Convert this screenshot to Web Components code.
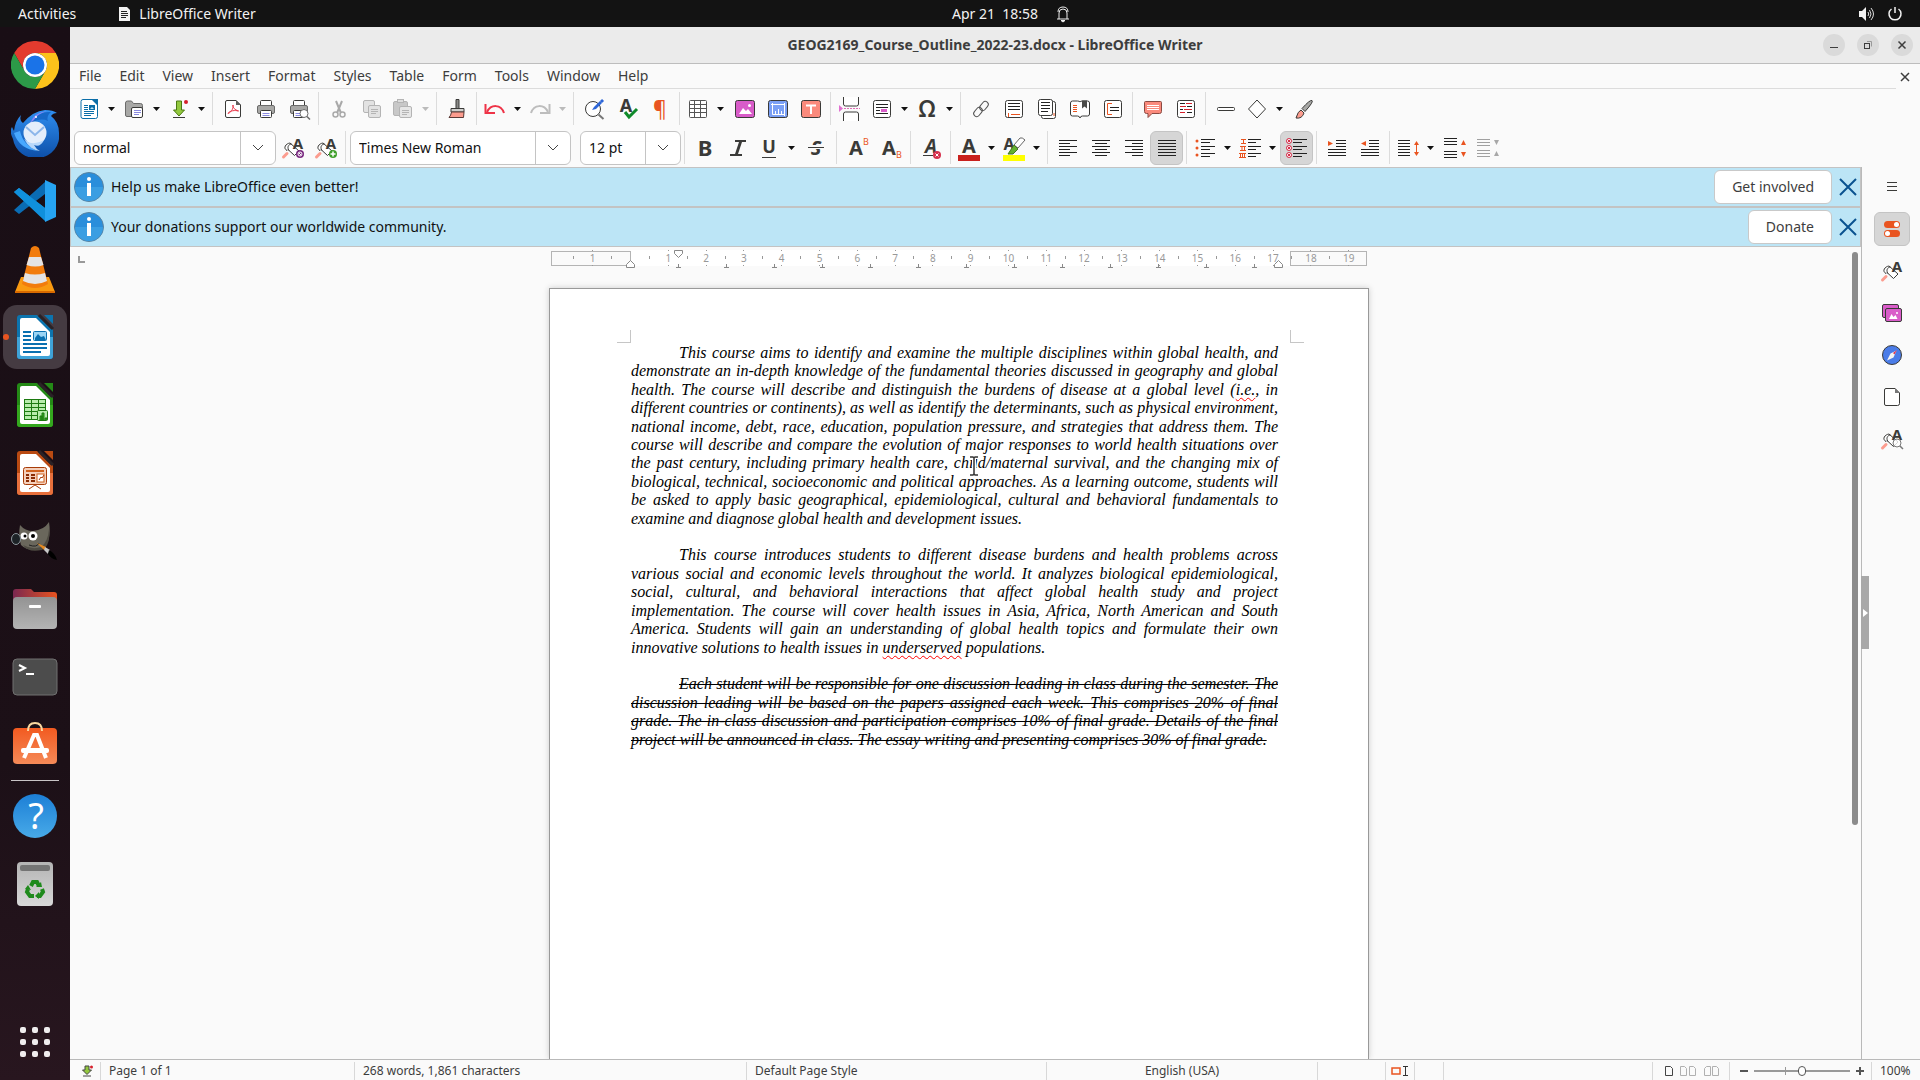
<!DOCTYPE html>
<html lang="en">
<head>
<meta charset="utf-8">
<title>GEOG2169_Course_Outline_2022-23.docx - LibreOffice Writer</title>
<style>
html,body{margin:0;height:100%}
body{font-family:"Noto Sans","Open Sans",sans-serif;font-size:14px;line-height:20px;color:#3d3d3d;background:#fafafa;overflow:hidden}
</style>
</head>
<body>
<desktop-shell>
  <top-panel slot="panel"></top-panel>
  <app-dock slot="dock"></app-dock>
  <writer-window>
    <title-bar slot="title">GEOG2169_Course_Outline_2022-23.docx - LibreOffice Writer</title-bar>
    <menu-bar slot="menu"></menu-bar>
    <standard-toolbar slot="tools"></standard-toolbar>
    <formatting-toolbar slot="tools"></formatting-toolbar>
    <info-bar slot="info" action="Get involved">Help us make LibreOffice even better!</info-bar>
    <info-bar slot="info" action="Donate">Your donations support our worldwide community.</info-bar>
    <doc-view slot="view">
      <doc-paragraph>
        <doc-line first>This course aims to identify and examine the multiple disciplines within global health, and</doc-line>
        <doc-line>demonstrate an in-depth knowledge of the fundamental theories discussed in geography and global</doc-line>
        <doc-line>health. The course will describe and distinguish the burdens of disease at a global level (<spell-error>i.e.</spell-error>, in</doc-line>
        <doc-line>different countries or continents), as well as identify the determinants, such as physical environment,</doc-line>
        <doc-line>national income, debt, race, education, population pressure, and strategies that address them. The</doc-line>
        <doc-line>course will describe and compare the evolution of major responses to world health situations over</doc-line>
        <doc-line>the past century, including primary health care, child/maternal survival, and the changing mix of</doc-line>
        <doc-line>biological, technical, socioeconomic and political approaches. As a learning outcome, students will</doc-line>
        <doc-line>be asked to apply basic geographical, epidemiological, cultural and behavioral fundamentals to</doc-line>
        <doc-line last>examine and diagnose global health and development issues.</doc-line>
      </doc-paragraph>
      <doc-line></doc-line>
      <doc-paragraph>
        <doc-line first>This course introduces students to different disease burdens and health problems across</doc-line>
        <doc-line>various social and economic levels throughout the world. It analyzes biological epidemiological,</doc-line>
        <doc-line>social, cultural, and behavioral interactions that affect global health study and project</doc-line>
        <doc-line>implementation. The course will cover health issues in Asia, Africa, North American and South</doc-line>
        <doc-line>America. Students will gain an understanding of global health topics and formulate their own</doc-line>
        <doc-line last>innovative solutions to health issues in <spell-error>underserved</spell-error> populations.</doc-line>
      </doc-paragraph>
      <doc-line></doc-line>
      <doc-paragraph>
        <doc-line struck first>Each student will be responsible for one discussion leading in class during the semester. The</doc-line>
        <doc-line struck>discussion leading will be based on the papers assigned each week. This comprises 20% of final</doc-line>
        <doc-line struck>grade. The in-class discussion and participation comprises 10% of final grade. Details of the final</doc-line>
        <doc-line struck last>project will be announced in class. The essay writing and presenting comprises 30% of final grade.</doc-line>
      </doc-paragraph>
    </doc-view>
    <side-bar slot="side"></side-bar>
    <status-bar slot="status"></status-bar>
  </writer-window>
</desktop-shell>

<script>
const RESET = `
:host,*{box-sizing:border-box}
button,input{font:inherit;color:inherit;margin:0;padding:0;border:0;background:none;outline:0}
button{display:flex;align-items:center;justify-content:center}
svg{display:block;flex:none}
`;
function define(name, css, html) {
  customElements.define(name, class extends HTMLElement {
    connectedCallback() {
      if (this.shadowRoot) return;
      const body = typeof html === 'function' ? html(this) : html;
      this.attachShadow({mode: 'open'}).innerHTML = `<style>${RESET}${css}</style>${body}`;
    }
  });
}

/* ---------- icon set ---------- */
const D = '#3a3a38', O = '#e95420', S = '#fc9c8e';
const rows = (list, c = '#222') => list.map(([x, y, w]) => `<path d="M${x} ${y}h${w}" stroke="${c}" stroke-width="1"/>`).join('');
const sheet = `<rect x="3.5" y="3.5" width="17" height="17" rx="2" fill="#fff" stroke="${D}"/>`;
const glyph = (t, x, y, size, extra = '') => `<text x="${x}" y="${y}" font-family="Noto Sans, sans-serif" font-weight="700" font-size="${size}" text-anchor="middle" fill="${D}" ${extra}>${t}</text>`;
const printer = `<rect x="6.5" y="3.5" width="11" height="6" rx="1" fill="#fff" stroke="${D}"/><rect x="3.5" y="8.5" width="17" height="8" rx="1.5" fill="#a8a8a6" stroke="#6b6b6a"/><rect x="6.5" y="13.5" width="11" height="7" rx="1" fill="#fff" stroke="${D}"/><path d="M8.5 16.5h7M8.5 18.5h7" stroke="#8a8ae0"/>`;
const styleBrush = `<path d="M2.5 21l3.5-3.5" stroke="${S}" stroke-width="3" stroke-linecap="round"/><path d="M6 14.500C1.500 12 5 7.500 9 7l9 8-4.500 4.500-6.500-6z" fill="#fff" stroke="${D}"/><path d="M8 14.500c-2-3-1-6 2.500-6.500" fill="none" stroke="${D}"/>` + glyph('A', 17, 13, 15);
const alignIcon = (w) => w.map(([x, l], i) => `<path d="M${x} ${4.5 + i * 3}h${l}" stroke="#222" stroke-width="1"/>`).join('');
const listRows = [[8, 3.5, 14], [8, 6.5, 9], [8, 10.5, 14], [8, 13.5, 9], [8, 17.5, 14], [8, 20.5, 9]];

const ICONS = {
  newdoc: `<path d="M6 2.5h10l4.500 4.500v12.500q0 2-2 2H6q-2 0-2-2v-15q0-2 2-2z" fill="#fff" stroke="#0a6da8"/><path d="M14 2h7v7z" fill="#0a6da8"/><path d="M7 8.500h4M7 10.500h4M7 12.500h4M7 14.500h10M7 16.500h10M7 18.500h7" stroke="#0a6da8"/><rect x="12" y="8" width="6" height="5" fill="#0a6da8"/><path d="M13 12l2-2 2 2z" fill="#bfe3f6"/>`,
  open: `<path d="M3.500 18V6q0-2 2-2h4l2 2.500h7q2 0 2 2V18q0 1.500-1.500 1.500H5q-1.500 0-1.500-1.500z" fill="#a8a8a6" stroke="#6b6b6a"/><rect x="9.500" y="10.500" width="11" height="10" rx="1.500" fill="#fff" stroke="${D}"/><path d="M12 13.500h7M12 15.500h7M12 17.500h5" stroke="#8a8ae0"/>`,
  save: `<path d="M9.500 4h5v9h3L12 19 6.500 13h3z" fill="#92c83e" stroke="#4b7a12"/><path d="M6 20.500h12" stroke="${D}"/><circle cx="19" cy="5" r="2" fill="#d6202c"/>`,
  pdf: `<path d="M6 3.500h9l4.500 4.500v11q0 1.500-1.500 1.500H6q-1.500 0-1.500-1.500V5q0-1.500 1.500-1.500z" fill="#fff" stroke="${D}"/><path d="M15 3v5h5z" fill="#5d5d5b"/><path d="M12 8c-1 3 4 6 6 6M12 8c1 4-3 8-5 8.500 1-3 8-3.500 10-2.500" fill="none" stroke="#e8384a"/>`,
  print: printer,
  preview: printer + `<circle cx="17" cy="16.500" r="4" fill="#fff" stroke="#6b6b6a"/><path d="M20 19.500l3 3" stroke="#6b6b6a" stroke-width="1.500"/>`,
  cut: `<g fill="none" stroke="#a9a9a9" stroke-width="1.500"><path d="M9 4l5 12M15 4l-5 12" stroke-width="2"/><circle cx="8.500" cy="17.500" r="2.500"/><circle cx="15.500" cy="17.500" r="2.500"/></g>`,
  copy: `<g fill="#e2e2e2" stroke="#b4b4b4"><rect x="3.500" y="3.500" width="11" height="12" rx="1.500"/><rect x="8.500" y="8.500" width="12" height="12" rx="1.500"/></g><path d="M11 12.500h7M11 14.500h7M11 16.500h5" stroke="#b4b4b4"/>`,
  paste: `<g fill="#c8c8c8" stroke="#b4b4b4"><rect x="2.500" y="4.500" width="14" height="14" rx="1.500"/><rect x="6.500" y="2.500" width="6" height="3" fill="#ddd"/><rect x="8.500" y="9.500" width="12" height="11" rx="1.500" fill="#e6e6e6"/></g><path d="M11 13.500h7M11 15.500h7M11 17.500h5" stroke="#b4b4b4"/>`,
  clone: `<path d="M11 2.500h3V12h-3z" fill="#8a8a88" stroke="${D}"/><path d="M6 11.500h13V15H6z" fill="#d0d0ce" stroke="${D}"/><path d="M6.500 15h12.500l-.5 5.500H4q2-2 2.500-5.500z" fill="${S}" stroke="#5a3a36"/>`,
  undo: `<path d="M4 15C8 7 18 7 21 16" fill="none" stroke="#ee3347" stroke-width="2"/><path d="M2.500 7v9H12" fill="none" stroke="#ee3347" stroke-width="2"/>`,
  redo: `<path d="M20 15C16 7 6 7 3 16" fill="none" stroke="#bdbdbd" stroke-width="2"/><path d="M21.500 7v9H12" fill="none" stroke="#bdbdbd" stroke-width="2"/>`,
  find: `<circle cx="11" cy="12" r="7.500" fill="#fff" stroke="${D}"/><path d="M16.500 17.500l5 4.500" stroke="#777" stroke-width="2"/><path d="M10 13l2-3 6-6 2 2-6 6z" fill="#2d66d8"/><path d="M19 3l2 2" stroke="#2d66d8" stroke-width="3"/>`,
  spell: glyph('A', 11, 15, 18) + `<path d="M10 15l4 5 8-8" fill="none" stroke="#0f8a2a" stroke-width="3"/>`,
  marks: `<text x="12" y="19" font-family="Noto Sans, sans-serif" font-size="21" text-anchor="middle" fill="${O}">¶</text>`,
  table: `<rect x="3.500" y="3.500" width="17" height="17" rx="1" fill="#fff" stroke="#555"/><path d="M3 7.500h18M3 11.500h18M3 15.500h18M8.500 3v18M14.500 3v18" stroke="#555"/>`,
  image: `<rect x="2.500" y="3.500" width="19" height="17" rx="2" fill="#d95cc9" stroke="${D}"/><path d="M6 17l4-6 3 3 2-2 4 5z" fill="#fff"/><circle cx="16.500" cy="8.500" r="1.500" fill="#fff"/>`,
  chart: `<rect x="2.500" y="3.500" width="19" height="17" rx="2" fill="#7ba0f5" stroke="${D}"/><path d="M6.500 6v11.500H19M5 7.500h14M18.500 6v13M9.500 17v-3M12.500 17v-5M15.500 17v-3" fill="none" stroke="#fff"/>`,
  textbox: `<rect x="2.500" y="3.500" width="19" height="17" rx="2" fill="#fa8a7c" stroke="${D}"/><path d="M7 8.500h10M12 8v9" stroke="#fff" stroke-width="2"/>`,
  pagebreak: `<path d="M4.500 0v7q0 2 2 2h11q2 0 2-2V0M4.500 24v-7q0-2 2-2h11q2 0 2 2v7" fill="#fff" stroke="${D}"/><path d="M5 11.500h16" stroke="#e070b8" stroke-dasharray="2 1"/><path d="M0 8l4 3.500-4 3.500z" fill="#e070d0"/>`,
  field: `<rect x="3.500" y="3.500" width="17" height="17" rx="2" fill="#fff" stroke="${D}"/>${rows([[6, 7.5, 12], [6, 10.5, 12], [6, 13.5, 4], [6, 16.5, 12]])}<rect x="11" y="12" width="6" height="3" fill="#d95cc9"/>`,
  omega: `<text x="12" y="20" font-family="Noto Sans, sans-serif" font-size="23" font-weight="600" text-anchor="middle" fill="${D}">Ω</text>`,
  link: `<g fill="none" stroke="#555"><rect x="-5" y="-3" width="10" height="6" rx="3" transform="translate(9 15) rotate(-50)"/><rect x="-5" y="-3" width="10" height="6" rx="3" transform="translate(15 9) rotate(-50)"/></g>`,
  footnote: sheet + rows([[6, 6.5, 12], [6, 9.5, 12], [6, 12.5, 12]]) + `<path d="M9 17.500h9M6.500 16v4" stroke="${O}"/>`,
  endnote: `<rect x="6.500" y="4.500" width="14" height="17" rx="2" fill="#fff" stroke="${D}"/><rect x="3.500" y="2.500" width="14" height="16" rx="2" fill="#fff" stroke="${D}"/>${rows([[6, 5.5, 9], [6, 8.5, 9], [6, 11.5, 9], [6, 14.5, 7]])}<path d="M19 16v3" stroke="${O}"/>`,
  bookmark: `<path d="M2.500 6q0-2 2-2h5q2 0 2.500 1 .5-1 2.500-1h5q2 0 2 2v11q0 2-2 2h-5q-2 0-2.500 2-.5-2-2.500-2h-5q-2 0-2-2z" fill="#fff" stroke="${D}"/><path d="M5 8.500h4M5 10.500h4M5 12.500h4M5 14.500h4" stroke="${O}"/><path d="M14 3.500h5v8l-2.500-2-2.500 2z" fill="#4b4b49"/>`,
  xref: sheet + `<path d="M11 6.500H6.500v11H11" fill="none" stroke="${O}"/>${rows([[9, 10.5, 9], [9, 13.5, 9]])}`,
  comment: `<path d="M4.500 4.500h15q1 0 1 1v9q0 2-2 2H11L7 20.500v-4H5.500q-2 0-2-2v-9q0-1 1-1z" fill="#fa8a7c" stroke="#8a4a42"/><path d="M6 8.500h12M6 10.500h12M6 12.500h12" stroke="#fff"/>`,
  track: sheet + rows([[6, 6.5, 5], [13, 9.5, 5], [6, 12.5, 3], [13, 15.5, 5]]) + rows([[12, 6.5, 6], [6, 9.5, 6], [10, 12.5, 8], [6, 15.5, 5]], '#d6202c'),
  line: `<rect x="3.500" y="10.500" width="17" height="3" rx="1" fill="#fff" stroke="${D}"/>`,
  shape: `<path d="M12 3l8.500 9-8.500 9-8.500-9z" fill="#fff" stroke="${D}"/>`,
  draw: `<path d="M20 3.500q2 1-7 11l-3-3q8-9 10-8z" fill="#a8a8a6" stroke="${D}"/><path d="M9 13l3 3q-2 6-8 5 2-7 5-8z" fill="${S}" stroke="${D}"/>`,

  style1: styleBrush + `<circle cx="19" cy="18" r="4" fill="#7a2a80"/><circle cx="19" cy="18" r="2" fill="none" stroke="#fff"/><path d="M18 17l2 2" stroke="#fff"/>`,
  style2: styleBrush + `<circle cx="19" cy="18" r="4" fill="#3f9f2a"/><path d="M16.500 18h5M19 15.500v5" stroke="#fff" stroke-width="1.500"/>`,
  style: styleBrush,
  styleInspect: styleBrush + `<circle cx="17" cy="16" r="4" fill="#fff" fill-opacity=".8" stroke="#777"/><path d="M20 19l3 3" stroke="#777" stroke-width="1.500"/>`,
  bold: glyph('B', 12, 20, 22),
  italic: `<path d="M9 4h11v2h-4l-4 12h4v2H4v-2h5l4-12H9z" fill="${D}"/>`,
  under: glyph('U', 12, 17, 18) + `<path d="M5 21.500h14" stroke="${D}"/>`,
  strike: glyph('S', 12, 19, 20, 'font-style="italic"') + `<path d="M4 11h16" stroke="#fafafa" stroke-width="4"/><path d="M4 11.500h16" stroke="${D}"/>`,
  sup: glyph('A', 10, 19, 20) + `<text x="20" y="9" font-family="Noto Sans, sans-serif" font-size="9" text-anchor="middle" fill="${O}">B</text>`,
  sub: glyph('A', 10, 19, 20) + `<text x="20" y="22" font-family="Noto Sans, sans-serif" font-size="9" text-anchor="middle" fill="${O}">B</text>`,
  clear: glyph('A', 12, 17, 19, 'font-style="italic"') + `<path d="M4 19.500h10" stroke="${D}"/><circle cx="18" cy="19" r="4" fill="#d6304c"/><path d="M16.500 17.500l3 3M19.500 17.500l-3 3" stroke="#fff"/>`,
  fontcolor: glyph('A', 12, 17, 20) + `<path d="M1 19h22v6H1z" fill="#c9211e"/>`,
  highlight: glyph('A', 7, 14, 16) + `<path d="M12 9l6-7q2-1 5 2l-7 8z" fill="#fff" stroke="#666"/><path d="M12 9l4 4-5 5H6z" fill="#62b030" stroke="#447722"/><path d="M1 19h22v6H1z" fill="#ff0"/>`,
  left: alignIcon([[3, 18], [3, 11], [3, 18], [3, 11], [3, 18], [3, 11]]),
  center: alignIcon([[3, 18], [6, 12], [3, 18], [6, 12], [3, 18], [6, 12]]),
  right: alignIcon([[3, 18], [10, 11], [3, 18], [10, 11], [3, 18], [10, 11]]),
  justify: alignIcon([[3, 18], [3, 18], [3, 18], [3, 18], [3, 18], [3, 18]]),
  bullets: [5, 12, 19].map(y => `<circle cx="4" cy="${y}" r="1.500" fill="${O}"/>`).join('') + rows(listRows),
  numbers: `<path d="M3 3.500h5M3 7.500h5M5.500 3v4M2 10.500h6M2 14.500h6M4 10v4M6.500 10v4M1 17.500h7M1 21.500h7M2.500 17v4M4.500 17v4M6.500 17v4" stroke="${O}"/>` + rows([[10, 3.5, 13], [10, 6.5, 8], [10, 10.5, 13], [10, 13.5, 8], [10, 17.5, 13], [10, 20.5, 8]]),
  nolist: [5, 12, 19].map(y => `<circle cx="4" cy="${y}" r="2.500" fill="#fff" stroke="#d6304c"/><path d="M2.500 ${y - 1.5}l3 3m0-3l-3 3" stroke="#d6304c"/>`).join('') + rows(listRows),
  indent: `<path d="M3 5v5l5-2.500z" fill="${O}"/>` + rows([[11, 4.5, 10], [11, 7.5, 10], [11, 10.5, 10], [3, 13.5, 18], [3, 16.5, 18], [3, 19.5, 18]]),
  outdent: `<path d="M8 5v5L3 7.500z" fill="${O}"/>` + rows([[11, 4.5, 10], [11, 7.5, 10], [11, 10.5, 10], [3, 13.5, 18], [3, 16.5, 18], [3, 19.5, 18]]),
  spacing: rows([[2, 4.5, 12], [2, 7.5, 12], [2, 10.5, 12], [2, 13.5, 12], [2, 16.5, 12], [2, 19.5, 12]]) + `<path d="M20.500 7v11" stroke="${O}"/><path d="M18 9l2.500-4L23 9zM18 16l2.500 4L23 16z" fill="${O}"/>`,
  parainc: rows([[1, 2.5, 13], [1, 5.5, 13], [1, 8.5, 13], [1, 15.5, 13], [1, 18.5, 13], [1, 21.5, 13]]) + `<path d="M18 9l2.500-5L23 9zM18 16l2.500 5 2.500-5z" fill="${O}"/>`,
  paradec: rows([[1, 3.5, 13], [1, 6.5, 13], [1, 9.5, 13], [1, 14.5, 13], [1, 17.5, 13], [1, 20.5, 13]], '#a0a0a0') + `<path d="M18 4l2.500 5L23 4zM18 20l2.500-5 2.500 5z" fill="#a8a8a8"/>`,

  menu: `<path d="M7 7.500h10M7 11.500h10M7 15.500h10" stroke="${D}"/>`,
  props: `<rect x="4" y="4" width="16" height="7" rx="3.500" fill="${O}"/><circle cx="16.500" cy="7.500" r="2.500" fill="#fff"/><rect x="4" y="13" width="16" height="7" rx="3.500" fill="${O}"/><circle cx="7.500" cy="16.500" r="2.500" fill="#fff"/>`,
  gallery: `<rect x="2.500" y="3.500" width="16" height="13" rx="1.500" fill="#d95cc9" stroke="${D}"/><rect x="5.500" y="7.500" width="16" height="13" rx="1.500" fill="#d95cc9" stroke="${D}"/><path d="M9 18l2.500-5 2 3 2-2 2 4z" fill="#fff"/><circle cx="17" cy="12" r="1" fill="#fff"/>`,
  navigator: `<circle cx="12" cy="12" r="9.500" fill="#4a7ce8" stroke="${D}"/><path d="M16.500 7.500l-3 7-6.500 3 3.500-7z" fill="#f4f4f4"/><path d="M13 10l4-3-2.500 4.500z" fill="#e0304a"/>`,
  page: `<path d="M6 3.500h9l4.500 4.500v10.500q0 2-2 2H6q-1.500 0-1.500-1.500V5q0-1.500 1.500-1.500z" fill="#fff" stroke="${D}"/><path d="M15 3v5h5z" fill="#777"/>`,
  close: `<path d="M4 4l16 16M20 4L4 20" stroke="#0a5290" stroke-width="2"/>`
};
/* path data pads halves to three digits; trim them before drawing */
for (const k in ICONS) ICONS[k] = ICONS[k].replace(/\.500/g, '.5');
define('ui-icon', `:host{display:block;width:24px;height:24px;flex:none}svg{overflow:visible}`,
  el => `<svg width="24" height="24" viewBox="0 0 24 24" fill="none" aria-hidden="true">${ICONS[el.getAttribute('name')]}</svg>`);

/* ---------- shell ---------- */
define('desktop-shell', `:host{display:grid;grid-template:27px minmax(0,1fr) / 70px minmax(0,1fr);height:100vh}
slot[name=panel]{display:block;grid-column:1/3}`,
  `<slot name="panel"></slot><slot name="dock"></slot><slot></slot>`);

define('top-panel', `:host{display:grid;grid-template-columns:1fr auto 1fr;align-items:center;background:#131313;color:#f2f2f2;height:27px}
.l{display:flex;align-items:center;padding-left:18px;gap:42px}
.app,.c,.r{display:flex;align-items:center}.app{gap:8px}
.c{gap:18px;padding-left:102px;white-space:pre}
.r{justify-content:flex-end;gap:13px;padding-right:17px}`,
`<div class="l"><button>Activities</button><button class="app"><svg width="13" height="16" viewBox="0 0 13 16"><path d="M1 1h8l3 3v11H1z" fill="#f2f2f2"/><path d="M3 5.5h6M3 7.5h7M3 9.5h7M3 11.5h5" stroke="#222"/></svg>LibreOffice Writer</button></div>
<button class="c">Apr 21  18:58<svg width="14" height="18" viewBox="0 0 14 18" fill="none" stroke="#eee"><path d="M1 14h12M3 14V8q0-4 4-4t4 4v6M2 7q0-5 5-5t5 5"/><path d="M5 15.5h4l-2 1.5z" fill="#eee"/></svg></button>
<div class="r"><button aria-label="Volume"><svg width="16" height="16" viewBox="0 0 16 16"><path d="M1 5h3l4-4v14l-4-4H1z" fill="#f2f2f2"/><path d="M10 6q1.5 2 0 4M11.5 4q3 4 0 8M13 2q5 6 0 12" fill="none" stroke="#ddd"/></svg></button>
<button aria-label="Power"><svg width="16" height="16" viewBox="0 0 16 16" fill="none" stroke="#f2f2f2" stroke-width="1.5"><path d="M4.5 3a6 6 0 1 0 7 0M8 1v6"/></svg></button></div>`);

/* ---------- dock ---------- */
const loDoc = (c1, c2, art) => `<path d="M9 2h17l14 14 2 0v27q0 3-3 3H9q-3 0-3-3V5q0-3 3-3z" fill="${c1}"/><path d="M6 24h36v19q0 3-3 3H9q-3 0-3-3z" fill="${c2}"/><path d="M11 5h14l14 14v22q0 2-2 2H11q-2 0-2-2V7q0-2 2-2z" fill="#fff"/><path d="M28 2l14 14" stroke="#2a2226" stroke-width="3"/><path d="M33 2h9v9z" fill="${c1}"/>${art}`;
const DOCK = {
  Chrome: `<path d="M24 12H44.8A24 24 0 0 1 24 48L34.4 30A12 12 0 0 0 24 12Z" fill="#fcc21b"/><path d="M3.2 12A24 24 0 0 1 44.8 12H24A12 12 0 0 0 13.6 30Z" fill="#e33b2e"/><path d="M3.2 12L13.6 30A12 12 0 0 0 34.4 30L24 48A24 24 0 0 1 3.2 12Z" fill="#2c9a48"/><circle cx="24" cy="24" r="12" fill="#fff"/><circle cx="24" cy="24" r="9.5" fill="#1a73e8"/>`,
  Thunderbird: `<defs><linearGradient id="t" x1="0" y1="0" x2="0" y2="1"><stop offset="0" stop-color="#2f8ff0"/><stop offset="1" stop-color="#0d4fa8"/></linearGradient></defs><path d="M10 6q-2 6 2 8Q22 2 34 1q8 0 12 3-4 0-6 3 8 6 8 17a23 22 0 0 1-46 6q-4-8-1-12l2 4Q4 12 10 6z" fill="url(#t)"/><path d="M19 15Q25 2 40 3q-5 4-3 9-8-4-18 3z" fill="#1768c8"/><path d="M19 14Q24 3 36 2q-10 3-13 9z" fill="#8d86f5"/><circle cx="25" cy="8" r="1" fill="#fff"/><path d="M3 24q5 16 24 18-15-6-18-20z" fill="#48a8ff"/><circle cx="24" cy="24" r="11.5" fill="#e4eefb"/><path d="M15 18l9 8 9-8" fill="none" stroke="#8cb6ea" stroke-width="2"/><path d="M13 30q8 8 20 1-4 8-10 5 2 4 6 6-10-1-16-12z" fill="#b8d8fa"/>`,
  'VS Code': `<path d="M3 15l5-4 26 20v12z" fill="#0f8bd8"/><path d="M3 33l5 4L34 17V5z" fill="#0a6cb4"/><path d="M34 3l11 5v32l-11 5z" fill="#26a4f2"/><path d="M3 15l5-4 26 20v13z" fill="#1090dc"/>`,
  VLC: `<path d="M10 32h28l6 15v2H4v-2z" fill="#f99a10"/><path d="M4 46h40v3H4z" fill="#d86a00"/><path d="M20 3q4-4 8 0l9 36q-13 8-26 0z" fill="#f27c0c"/><path d="M18 12h12l2.5 8q-8 3-17 0zM14 28q10 3 20 0l2 8q-12 6-24 0z" fill="#e4e4e4"/>`,
  Writer: loDoc('#0c74ae', '#3fa3d8', `<path d="M12 19h8M12 23h8M12 27h8M12 31h24M12 35h24M12 39h18" stroke="#0a70b0" stroke-width="2"/><rect x="22.5" y="18.5" width="13" height="9" rx="1" fill="#9bd4f4" stroke="#0a70b0"/><path d="M24 27v-2l3-4 3 3 3-1 2 4z" fill="#0a70b0"/>`),
  Calc: loDoc('#248a16', '#34a81e', `<rect x="13.5" y="18.5" width="21" height="20" fill="#b8ecac" stroke="#1c7a10"/><path d="M13 22.5h22M13 26.5h22M13 30.5h22M13 34.5h22M20.5 18v21M27.5 18v21" stroke="#1c7a10"/><rect x="26.5" y="29.5" width="10" height="10" rx="1" fill="#b8ecac" stroke="#1c7a10"/><path d="M29 39v-4h2v4M31 39v-7h2v7M34 39v-2h2v2" stroke="#1c7a10" fill="#34a81e"/>`),
  Impress: loDoc('#b94a12', '#e8703c', `<rect x="12.5" y="18.5" width="23" height="17" rx="2" fill="#f4d0bc" stroke="#a83c08"/><path d="M15 22h18" stroke="#d0601c" stroke-width="2"/><path d="M15 26h3M15 29h3M15 32h3M20 26h4M20 29h4M20 32h4" stroke="#8a2c04" stroke-width="2"/><rect x="26" y="25" width="7" height="8" fill="#fff" stroke="#d0601c"/><path d="M28 31l2-3 1 1 2-3M24 36l-6 4M24 36l6 4" stroke="#a83c08" fill="none"/>`),
  GIMP: `<path d="M9 8q5 6 13 6 11-1 16-9 3 20-7 27-14 3-21-4-3-9-1-20z" fill="#6a675c"/><path d="M12 28q9 5 18 2 7-5 8-18 2 16-7 21-14 3-19-5z" fill="#4e4b42"/><circle cx="13" cy="19" r="3.5" fill="#fff"/><circle cx="22" cy="19" r="4.500" fill="#fff"/><circle cx="14" cy="19" r="1.500"/><circle cx="22" cy="19" r="2"/><ellipse cx="5" cy="22" rx="4.500" ry="5.500" fill="#1c2226" stroke="#8c969c"/><path d="M18 28q8 3 10-2" stroke="#222" fill="none"/><path d="M26 26l9 4-2 3z" fill="#e88a20"/><path d="M34 30l5 3-2 4-4-4z" fill="#c8c8c8"/><path d="M38 33q6 3 8 10-6-1-9-6z" fill="#000"/>`.replace(/\.500/g, '.5'),
  Files: `<defs><linearGradient id="f"><stop offset="0" stop-color="#7a2850"/><stop offset="1" stop-color="#e95420"/></linearGradient><linearGradient id="g" x1="0" y1="0" x2="0" y2="1"><stop offset="0" stop-color="#939393"/><stop offset="1" stop-color="#b4b4b4"/></linearGradient></defs><path d="M5 4h15l3 3h20q3 0 3 3v14H2V7q0-3 3-3z" fill="url(#f)"/><rect x="2" y="12" width="44" height="32" rx="4" fill="url(#g)"/><rect x="18" y="20" width="12" height="3" rx="1" fill="#fff"/>`,
  Terminal: `<rect x="2" y="6" width="44" height="36" rx="4" fill="#4c4c4c" stroke="#707070"/><path d="M8 12l6 3-6 3M15 21h8" fill="none" stroke="#fff" stroke-width="2"/>`,
  Software: `<defs><linearGradient id="s" x1="0" y1="0" x2="0" y2="1"><stop offset="0" stop-color="#f25a20"/><stop offset="1" stop-color="#f58a58"/></linearGradient></defs><rect x="2" y="7" width="44" height="36" rx="4" fill="url(#s)"/><path d="M17 10q0-8 7-8t7 8" fill="none" stroke="#fbd9a0" stroke-width="2"/><path d="M13 37l10-23h3l9 23" fill="none" stroke="#fff" stroke-width="4"/><rect x="10" y="27" width="28" height="5" rx="2" fill="#fff"/>`,
  Help: `<defs><linearGradient id="h" x1="0" y1="0" x2="0" y2="1"><stop offset="0" stop-color="#1c7fd6"/><stop offset="1" stop-color="#48aae8"/></linearGradient></defs><circle cx="24" cy="24" r="22" fill="url(#h)"/><text x="25" y="37" font-family="Noto Sans, sans-serif" font-size="36" text-anchor="middle" fill="#fff">?</text>`,
  Trash: `<defs><linearGradient id="r" x1="0" y1="0" x2="0" y2="1"><stop offset="0" stop-color="#b4b4b4"/><stop offset="1" stop-color="#d8d8d8"/></linearGradient></defs><rect x="6" y="2" width="36" height="44" rx="4" fill="url(#r)"/><rect x="9" y="5" width="30" height="6" rx="2" fill="#747474"/><g fill="none" stroke="#1f8a1c" stroke-width="4"><path d="M20 26l2-4h4l2 4"/><path d="M17 29l-1 3 3 4h4"/><path d="M31 29l1 3-3 4h-3"/></g><path d="M25 27h6l-1-5zM14 29l6 1-3-5zM28 32v7l-4-3z" fill="#1f8a1c"/>`
};
define('dock-item', `:host{display:flex;height:68px;align-items:center;justify-content:center}
button{position:relative;width:64px;height:64px;border-radius:14px}
:host([active]) button{background:#453b42}
:host([active]) button::before{content:"";position:absolute;left:0;top:29px;width:6px;height:6px;border-radius:3px;background:#e95420}`,
  el => `<button aria-label="${el.getAttribute('app')}"><svg width="48" height="48" viewBox="0 0 48 48">${DOCK[el.getAttribute('app')]}</svg></button>`);
define('app-dock', `:host{display:flex;flex-direction:column;background:linear-gradient(#190e15,#1c1017 70%,#28161f);padding:4px 0 6px}
hr{width:48px;height:1px;border:0;background:#c8c4c6;margin:1px auto}
.grid{margin-top:auto;height:64px}`,
  Object.keys(DOCK).map(k => (k === 'Help' ? '<hr>' : '') + `<dock-item app="${k}"${k === 'Writer' ? ' active' : ''}></dock-item>`).join('') +
  `<button class="grid" aria-label="Show applications"><svg width="30" height="30" viewBox="0 0 30 30" fill="#efedee">${[0, 12, 24].map(y => [0, 12, 24].map(x => `<rect x="${x}" y="${y}" width="6" height="6" rx="2"/>`).join('')).join('')}</svg></button>`);

/* ---------- writer window ---------- */
define('writer-window', `:host{display:flex;flex-direction:column;min-width:0;background:#fafafa}
.main{display:flex;flex:1;min-height:0}
.col{display:flex;flex-direction:column;flex:1;min-width:0;border-right:1px solid #b9b9b9}
.tools{display:flex;flex-direction:column}`,
`<slot name="title"></slot><slot name="menu"></slot><div class="tools"><slot name="tools"></slot></div>
<div class="main"><div class="col"><slot name="info"></slot><slot name="view"></slot></div><slot name="side"></slot></div><slot name="status"></slot>`);

define('title-bar', `:host{display:grid;grid-template-columns:1fr auto 1fr;align-items:center;height:37px;background:#ebebeb;border-bottom:1px solid #bdbdbd}
h1{margin:0;font-size:14px;line-height:20px;font-weight:700;grid-column:2}
.b{display:flex;gap:12px;justify-content:flex-end;padding-right:7px}
button{width:22px;height:22px;border-radius:11px;background:#dadada}`,
`<h1><slot></slot></h1><div class="b">
<button aria-label="Minimize"><svg width="10" height="10" stroke="#3d3d3d"><path d="M1 7.5h8"/></svg></button>
<button aria-label="Restore"><svg width="10" height="10" stroke="#3d3d3d" fill="none"><rect x="1.5" y="3.5" width="5" height="5"/><path d="M4 1.5h4.5v5" stroke="#999"/></svg></button>
<button aria-label="Close"><svg width="10" height="10" stroke="#3d3d3d" stroke-width="1.5"><path d="M1.5 1.5l7 7M8.5 1.5l-7 7"/></svg></button></div>`);

define('menu-bar', `:host{display:flex;height:25px}
nav{display:flex;flex:1;align-items:center;border-bottom:1px solid #dcdcdc}
button{padding:0 9px}
.x{width:24px;padding:0 6px 0 0}`,
`<nav>${['File', 'Edit', 'View', 'Insert', 'Format', 'Styles', 'Table', 'Form', 'Tools', 'Window', 'Help'].map(t => `<button>${t}</button>`).join('')}</nav>
<button class="x" aria-label="Close document"><svg width="10" height="10" stroke="#3d3d3d" stroke-width="1.5"><path d="M1 1l8 8M9 1l-8 8"/></svg></button>`);

define('tool-button', `:host{display:block;flex:none;width:33px}
:host([split]){display:flex;width:45px}
button{width:33px;height:34px}
:host([split]) button{width:30px}
:host([split]) button.a{width:15px}
:host([pressed]) button{background:#d6d6d6;border:1px solid #c4c4c4;border-radius:6px}`,
  el => `<button aria-label="${el.getAttribute('icon')}"><ui-icon name="${el.getAttribute('icon')}"></ui-icon></button>` +
    (el.hasAttribute('split') ? `<button class="a" aria-label="More"><svg width="7" height="4"><path d="M0 0h7L3.5 4z" fill="${el.getAttribute('split') === 'off' ? '#bbb' : '#111'}"/></svg></button>` : ''));
define('tool-sep', `:host{display:block;flex:none;width:1px;height:33px;margin:0 3px;background:#dcdcdc}:host([wide]){margin:0 4px}`, '');

const bar = s => s.split(' ').map(t => {
  if (t === '|') return '<tool-sep></tool-sep>';
  if (t === '||') return '<tool-sep wide></tool-sep>';
  const m = t.match(/^(\w+?)(\+|-|!)?$/);
  return `<tool-button icon="${m[1]}"${m[2] === '+' ? ' split' : m[2] === '-' ? ' split="off"' : m[2] === '!' ? ' pressed' : ''}></tool-button>`;
}).join('');
const barCss = `:host{display:flex;align-items:center;height:39px;padding-left:4px}`;
define('standard-toolbar', barCss, bar('newdoc+ open+ save+ | pdf print preview | cut copy paste- | clone | undo+ redo- | find spell marks | table+ image chart textbox | pagebreak field+ omega+ | link footnote endnote bookmark xref | comment track | line shape+ draw'));

define('combo-box', `:host{display:flex;flex:none;height:34px;border:1px solid #c4c4c4;border-radius:6px;background:#fff;overflow:hidden;color:#111;width:202px}
:host([size=font]){width:221px;margin:0 9px 0 1px}:host([size=small]){width:101px}
input{flex:1;min-width:0;padding-left:8px}
button{width:35px;border-left:1px solid #c4c4c4}`,
  el => `<input type="text" aria-label="${el.getAttribute('label')}" value="${el.getAttribute('value')}"><button aria-label="Open list"><svg width="12" height="7" fill="none" stroke="#444"><path d="M1 1l5 5 5-5"/></svg></button>`);
define('formatting-toolbar', barCss,
  `<combo-box label="Paragraph style" value="normal"></combo-box>` + bar('style1 style2 |') +
  `<combo-box size="font" label="Font name" value="Times New Roman"></combo-box><combo-box size="small" label="Font size" value="12 pt"></combo-box>` +
  bar('| bold italic under+ strike || sup sub | clear | fontcolor+ highlight+ | left center right justify! | bullets+ numbers+ nolist! | indent outdent | spacing+ parainc paradec'));

define('info-bar', `:host{display:flex;align-items:center;height:40px;flex:none;border:1px solid #c3c3c3;background:#bce5f6;padding-left:3px;color:#111}
p{margin:0;flex:1;padding-left:7px}
.act{height:34px;padding:0 17px;background:#fff;border:1px solid #c9c9c9;border-radius:6px;color:#3d3d3d}
.x{width:24px;height:24px;margin-left:4px}`,
  el => `<svg width="30" height="30" viewBox="0 0 30 30"><circle cx="15" cy="15" r="14.5" fill="#2a8edb" stroke="#5a83a0"/><path d="M1 15h28a14 14 0 0 1-28 0z" fill="#3a9ee2"/><circle cx="15" cy="7" r="2" fill="#fff"/><path d="M15 11v13" stroke="#fff" stroke-width="4"/></svg>
<p><slot></slot></p><button class="act">${el.getAttribute('action')}</button><button class="x" aria-label="Dismiss"><ui-icon name="close"></ui-icon></button>`);

/* ---------- document ---------- */
const ruler = () => {
  let s = `<rect x="81" y="3" width="660" height="16" fill="#fff"/><g fill="none" stroke="#b4b4b4"><rect x="2.5" y="4.5" width="79" height="14"/><rect x="741.5" y="4.5" width="76" height="14"/></g>`;
  for (let i = -2; i < 20; i++) {
    const x = 81.5 + i * 37.8;
    if (i && i > -2) s += `<text x="${x}" y="15" text-anchor="middle">${Math.abs(i)}</text><path d="M${Math.floor(x)}.5 18v1M${Math.floor(x)}.5 3v1" stroke="#999"/>`;
    if (i < 19) s += `<path d="M${Math.floor(x + 18.9)}.5 9v3" stroke="#999"/>`;
  }
  for (let i = 1; i < 14; i++) { const x = 81.5 + i * 48; s += `<path d="M${x} 17v3M${x - 2.5} 20.5h5" stroke="#888"/>`; }
  const home = x => `<path d="M${x - 4} 20.5v-3l4-4 4 4v3z" fill="#fff" stroke="#888"/>`;
  return s + `<path d="M125.5 3.5h8v3l-4 4-4-4z" fill="#fff" stroke="#888"/>` + home(81.5) + home(729.5);
};
define('doc-view', `:host{display:flex;flex:1;min-height:0;position:relative}
.area{flex:1;min-width:0;display:flex;flex-direction:column;align-items:center;overflow:hidden;position:relative}
.ruler{width:820px;height:41px;flex:none}
.ruler text{font-size:10px;fill:#999}
.tab{position:absolute;left:8px;top:9px}
.page{width:820px;flex:1;min-height:0;border:1px solid #999;border-bottom:0;background:#fff;box-shadow:0 0 6px #ccc;display:flex;flex-direction:column}
.corners{height:13px;margin:41px 64px 0 67px;display:flex;justify-content:space-between}
.corners i{width:14px;border:0 solid #c6c6c6;border-width:0 1px 1px 0}
.corners i+i{border-width:0 0 1px 1px}
article{display:grid;grid-template-rows:repeat(22,minmax(0,1fr));height:405px;margin:1px 90px 0 81px;font:italic 16px/18px "Liberation Serif",serif;color:#000}
.scroll{width:13px;flex:none;padding:5px 0 0 4px}
.scroll i{display:block;width:6px;height:71%;border-radius:3px;background:#8b8b8b}
.handle{position:absolute;right:-8px;top:329px;width:8px;height:73px;background:#a8a8a8;z-index:1}
.cursor{position:absolute;left:898px;top:208px}`,
`<div class="area"><svg class="tab" width="8" height="8"><path d="M1 0v6h6" fill="none" stroke="#999" stroke-width="2"/></svg>
<svg class="ruler" width="820" height="41">${ruler()}</svg>
<div class="page"><div class="corners"><i></i><i></i></div><article><slot></slot></article></div>
<svg class="cursor" width="12" height="22" viewBox="0 0 12 22"><path d="M2 2h3l1 1 1-1h3M2 20h3l1-1 1 1h3M6 3v16" fill="none" stroke="#fff" stroke-width="4"/><path d="M2 2h3l1 1 1-1h3M2 20h3l1-1 1 1h3M6 3v16" fill="none" stroke="#333" stroke-width="1.5"/></svg></div>
<div class="scroll"><i></i></div>
<button class="handle" aria-label="Hide sidebar"><svg width="5" height="8"><path d="M0 0l5 4-5 4z" fill="#fff"/></svg></button>`);
define('doc-paragraph', `:host{display:contents}`, `<slot></slot>`);
define('doc-line', `:host{display:block;white-space:nowrap;text-align:justify;text-align-last:justify}
:host([first]){padding-left:48px}:host([last]){text-align-last:left}
:host([struck]) span{text-decoration:line-through 1px}`, `<span><slot></slot></span>`);
define('spell-error', `:host{display:inline}span{text-decoration:underline wavy #f00 1px;text-underline-offset:2px;text-decoration-skip-ink:none}`, `<span><slot></slot></span>`);

/* ---------- sidebar and status bar ---------- */
define('side-bar', `:host{display:flex;flex-direction:column;align-items:center;width:58px;flex:none;padding:3px 0 0 2px;gap:8px}
button{width:36px;height:34px;border-radius:6px}
button:first-child{margin-bottom:2px}
.on{background:#d6d6d6;border:1px solid #c4c4c4}`,
  ['menu', 'props', 'style', 'gallery', 'navigator', 'page', 'styleInspect'].map(n => `<button aria-label="${n}"${n === 'props' ? ' class="on"' : ''}><ui-icon name="${n}"></ui-icon></button>`).join(''));

define('status-bar', `:host{display:flex;align-items:center;height:21px;flex:none;border-top:1px solid #b9b9b9;font-size:12px;line-height:18px;padding:2px 0 0 11px}
div{height:18px;display:flex;align-items:center;padding-left:8px;border-left:1px solid #d8d8d8;white-space:nowrap;flex:none}
.i{border:0;padding:0;width:19px}
.pg{width:254px}.w{width:392px}.st{width:300px}.la{width:271px;justify-content:center;padding:0}
.e1{width:68px}.e2{width:29px;padding-left:5px}.e3{flex:1}
.v{width:77px;gap:4px;padding-left:11px}.z{width:142px;gap:4px}.pc{width:49px}
input[type=range]{appearance:none;width:96px;height:12px;background:linear-gradient(#999,#999) 31px 2px/1px 8px no-repeat,linear-gradient(#999,#999) 0 5px/96px 2px no-repeat}
input::-webkit-slider-thumb{appearance:none;width:8px;height:10px;border:1px solid #555;border-radius:4px;background:#fff}
button svg{stroke:#555;stroke-width:2}`,
`<div class="i"><svg width="12" height="12" viewBox="0 0 24 24"><path d="M8 2h8v8h5l-9 9-9-9h5z" fill="#92c83e" stroke="#444" stroke-width="2"/><path d="M4 22h16" stroke="#444" stroke-width="2"/><circle cx="21" cy="4" r="3" fill="#d6202c"/></svg></div>
<div class="pg">Page 1 of 1</div><div class="w">268 words, 1,861 characters</div><div class="st">Default Page Style</div><div class="la">English (USA)</div>
<div class="e1"></div><div class="e2"><svg width="20" height="14" fill="none"><rect x="1" y="4" width="8" height="6" stroke="#e95420" stroke-width="1.5"/><path d="M12 2.5h5M12 11.5h5M14.5 2v10" stroke="#333"/></svg></div><div class="e2"></div><div class="e3"></div>
<div class="v"><svg width="60" height="14" fill="none"><path d="M1.5 2.5h5l2 2v7h-7z" stroke="#444"/><path d="M16.5 2.5h4l2 2v7h-6zM25.5 2.5h4l2 2v7h-6zM40.5 4.5l2-2h4v9h-6zM48.5 2.5h4l2 2v7h-6z" stroke="#b0b0b0"/></svg></div>
<div class="z"><button aria-label="Zoom out"><svg width="12" height="12"><path d="M2 6h8"/></svg></button><input type="range" min="0" max="100" value="50" aria-label="Zoom"><button aria-label="Zoom in"><svg width="12" height="12"><path d="M2 6h8M6 2v8"/></svg></button></div>
<div class="pc">100%</div>`);
</script>
</body>
</html>
